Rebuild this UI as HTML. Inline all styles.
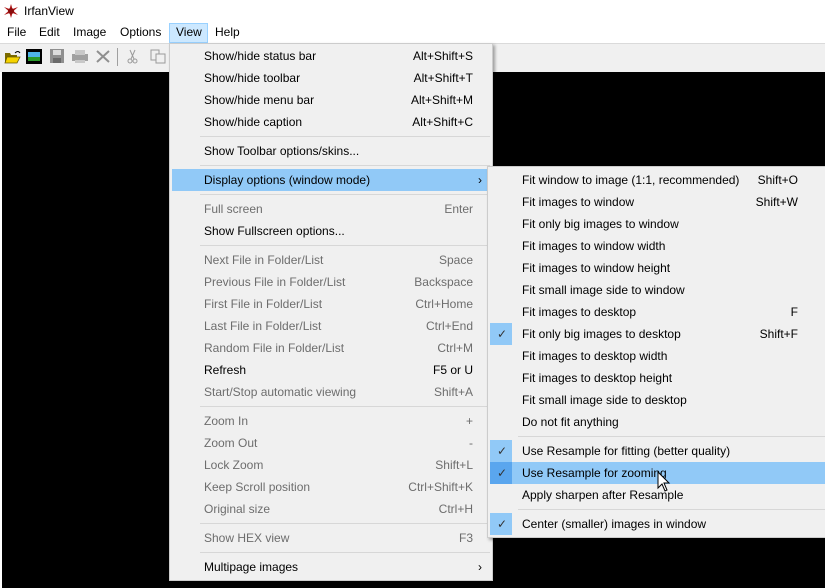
<!DOCTYPE html>
<html><head><meta charset="utf-8"><style>
*{margin:0;padding:0;box-sizing:border-box}
body{width:825px;height:588px;overflow:hidden;background:#fff;font-family:"Liberation Sans",sans-serif;font-size:12px;color:#000;position:relative}
.abs{position:absolute}
#title{left:0;top:0;width:825px;height:22px;background:#fff}
#title span{position:absolute;left:24px;top:4px;font-size:12px}
#menubar{left:0;top:22px;width:825px;height:21px;background:#fff}
#menubar span{position:absolute;top:3px}
#tb{left:0;top:43px;width:825px;height:29px;background:#f0f0f0;border-top:1px solid #dadada}
#black{left:2px;top:72px;width:823px;height:516px;background:#000}
.menu{background:#f0f0f0;border:1px solid #ccc;box-shadow:2px 2px 3px rgba(0,0,0,.35)}
.it{position:absolute;height:22px;line-height:22px;white-space:nowrap}
.it .t{position:absolute}
.it .k{position:absolute;text-align:right}
.dis{color:#6d6d6d}
.sep{position:absolute;height:1px;background:#d7d7d7}
.hl{background:#91c9f7}
.ck{position:absolute;width:22px;height:22px;background:#91c9f7}
.ck.dk{background:#5aa6ee}
</style></head><body>
<div id="title" class="abs">
<svg class="abs" style="left:3px;top:3px" width="16" height="16" viewBox="0 0 16 16"><path d="M8 1 L9.5 6 L15 4 L10.5 8 L15 12 L9.5 10 L8 15 L6.5 10 L1 12 L5.5 8 L1 4 L6.5 6Z" fill="#b01818"/><circle cx="8" cy="8" r="3" fill="#8a0c0c"/></svg>
<span>IrfanView</span></div>
<div id="menubar" class="abs">
<span style="left:7px">File</span><span style="left:39px">Edit</span><span style="left:73px">Image</span><span style="left:120px">Options</span>
<div class="abs" style="left:169px;top:1px;width:39px;height:20px;background:#cce8ff;border:1px solid #99d1ff"></div>
<span style="left:176px">View</span><span style="left:215px">Help</span></div>
<div id="tb" class="abs">
<svg class="abs" style="left:4px;top:5px" width="17" height="15"><path d="M1 4h5l1 2h6v8H1z" fill="#7a6a00"/><path d="M3 8h13l-3 6H1z" fill="#f5d300" stroke="#6a5a00" stroke-width=".8"/><path d="M11 4q3-3 5 0" stroke="#000" fill="none"/></svg>
<svg class="abs" style="left:26px;top:5px" width="16" height="15"><rect x="0" y="0" width="16" height="15" fill="#000"/><rect x="2" y="3" width="12" height="9" fill="#4fb4e8"/><rect x="2" y="8" width="12" height="4" fill="#2a9a2a"/></svg>
<svg class="abs" style="left:50px;top:5px" width="14" height="15"><rect width="14" height="14" fill="#8f8f8f"/><rect x="3" y="1" width="8" height="5" fill="#dcdcdc"/><rect x="3" y="9" width="8" height="5" fill="#6a6a6a"/></svg>
<svg class="abs" style="left:72px;top:5px" width="16" height="15"><rect x="0" y="5" width="16" height="7" fill="#a0a0a0"/><rect x="3" y="1" width="10" height="5" fill="#c8c8c8"/><rect x="3" y="11" width="10" height="3" fill="#c8c8c8"/></svg>
<svg class="abs" style="left:96px;top:6px" width="14" height="13"><path d="M1 1L13 12M13 1L1 12" stroke="#8f8f8f" stroke-width="2"/></svg>
<div class="abs" style="left:117px;top:4px;width:1px;height:18px;background:#a0a0a0"></div>
<svg class="abs" style="left:127px;top:5px" width="11" height="15"><path d="M3 1L7 10M8 1L4 10" stroke="#9a9a9a"/><circle cx="3" cy="12" r="2" fill="none" stroke="#9a9a9a"/><circle cx="8" cy="12" r="2" fill="none" stroke="#9a9a9a"/></svg>
<svg class="abs" style="left:150px;top:5px" width="16" height="15"><rect x="1" y="1" width="8" height="10" fill="none" stroke="#9a9a9a"/><rect x="6" y="5" width="9" height="9" fill="#f0f0f0" stroke="#9a9a9a"/></svg>
</div>
<div id="black" class="abs"></div>

<div class="abs menu" style="left:169px;top:43px;width:324px;height:538px">
<div class="it" style="left:0;top:1px;width:322px"><span class="t" style="left:34px">Show/hide status bar</span><span class="k" style="right:19px">Alt+Shift+S</span></div>
<div class="it" style="left:0;top:23px;width:322px"><span class="t" style="left:34px">Show/hide toolbar</span><span class="k" style="right:19px">Alt+Shift+T</span></div>
<div class="it" style="left:0;top:45px;width:322px"><span class="t" style="left:34px">Show/hide menu bar</span><span class="k" style="right:19px">Alt+Shift+M</span></div>
<div class="it" style="left:0;top:67px;width:322px"><span class="t" style="left:34px">Show/hide caption</span><span class="k" style="right:19px">Alt+Shift+C</span></div>
<div class="sep" style="left:30px;top:92px;width:290px"></div>
<div class="it" style="left:0;top:96px;width:322px"><span class="t" style="left:34px">Show Toolbar options/skins...</span></div>
<div class="sep" style="left:30px;top:121px;width:290px"></div>
<div class="it hl" style="left:2px;top:125px;width:318px"><span class="t" style="left:32px">Display options (window mode)</span><span class="k" style="right:8px">›</span></div>
<div class="sep" style="left:30px;top:150px;width:290px"></div>
<div class="it dis" style="left:0;top:154px;width:322px"><span class="t" style="left:34px">Full screen</span><span class="k" style="right:19px">Enter</span></div>
<div class="it" style="left:0;top:176px;width:322px"><span class="t" style="left:34px">Show Fullscreen options...</span></div>
<div class="sep" style="left:30px;top:201px;width:290px"></div>
<div class="it dis" style="left:0;top:205px;width:322px"><span class="t" style="left:34px">Next File in Folder/List</span><span class="k" style="right:19px">Space</span></div>
<div class="it dis" style="left:0;top:227px;width:322px"><span class="t" style="left:34px">Previous File in Folder/List</span><span class="k" style="right:19px">Backspace</span></div>
<div class="it dis" style="left:0;top:249px;width:322px"><span class="t" style="left:34px">First File in Folder/List</span><span class="k" style="right:19px">Ctrl+Home</span></div>
<div class="it dis" style="left:0;top:271px;width:322px"><span class="t" style="left:34px">Last File in Folder/List</span><span class="k" style="right:19px">Ctrl+End</span></div>
<div class="it dis" style="left:0;top:293px;width:322px"><span class="t" style="left:34px">Random File in Folder/List</span><span class="k" style="right:19px">Ctrl+M</span></div>
<div class="it" style="left:0;top:315px;width:322px"><span class="t" style="left:34px">Refresh</span><span class="k" style="right:19px">F5 or U</span></div>
<div class="it dis" style="left:0;top:337px;width:322px"><span class="t" style="left:34px">Start/Stop automatic viewing</span><span class="k" style="right:19px">Shift+A</span></div>
<div class="sep" style="left:30px;top:362px;width:290px"></div>
<div class="it dis" style="left:0;top:366px;width:322px"><span class="t" style="left:34px">Zoom In</span><span class="k" style="right:19px">+</span></div>
<div class="it dis" style="left:0;top:388px;width:322px"><span class="t" style="left:34px">Zoom Out</span><span class="k" style="right:19px">-</span></div>
<div class="it dis" style="left:0;top:410px;width:322px"><span class="t" style="left:34px">Lock Zoom</span><span class="k" style="right:19px">Shift+L</span></div>
<div class="it dis" style="left:0;top:432px;width:322px"><span class="t" style="left:34px">Keep Scroll position</span><span class="k" style="right:19px">Ctrl+Shift+K</span></div>
<div class="it dis" style="left:0;top:454px;width:322px"><span class="t" style="left:34px">Original size</span><span class="k" style="right:19px">Ctrl+H</span></div>
<div class="sep" style="left:30px;top:479px;width:290px"></div>
<div class="it dis" style="left:0;top:483px;width:322px"><span class="t" style="left:34px">Show HEX view</span><span class="k" style="right:19px">F3</span></div>
<div class="sep" style="left:30px;top:508px;width:290px"></div>
<div class="it" style="left:0;top:512px;width:322px"><span class="t" style="left:34px">Multipage images</span><span class="k" style="right:10px">›</span></div>
</div>

<div class="abs menu" style="left:487px;top:166px;width:345px;height:372px">
<div class="it" style="left:0;top:2px;width:343px"><span class="t" style="left:34px">Fit window to image (1:1, recommended)</span><span class="k" style="right:33px">Shift+O</span></div>
<div class="it" style="left:0;top:24px;width:343px"><span class="t" style="left:34px">Fit images to window</span><span class="k" style="right:33px">Shift+W</span></div>
<div class="it" style="left:0;top:46px;width:343px"><span class="t" style="left:34px">Fit only big images to window</span></div>
<div class="it" style="left:0;top:68px;width:343px"><span class="t" style="left:34px">Fit images to window width</span></div>
<div class="it" style="left:0;top:90px;width:343px"><span class="t" style="left:34px">Fit images to window height</span></div>
<div class="it" style="left:0;top:112px;width:343px"><span class="t" style="left:34px">Fit small image side to window</span></div>
<div class="it" style="left:0;top:134px;width:343px"><span class="t" style="left:34px">Fit images to desktop</span><span class="k" style="right:33px">F</span></div>
<div class="ck" style="left:2px;top:156px"></div>
<div class="it" style="left:0;top:156px;width:343px"><span class="t" style="left:9px;color:#333">✓</span><span class="t" style="left:34px">Fit only big images to desktop</span><span class="k" style="right:33px">Shift+F</span></div>
<div class="it" style="left:0;top:178px;width:343px"><span class="t" style="left:34px">Fit images to desktop width</span></div>
<div class="it" style="left:0;top:200px;width:343px"><span class="t" style="left:34px">Fit images to desktop height</span></div>
<div class="it" style="left:0;top:222px;width:343px"><span class="t" style="left:34px">Fit small image side to desktop</span></div>
<div class="it" style="left:0;top:244px;width:343px"><span class="t" style="left:34px">Do not fit anything</span></div>
<div class="sep" style="left:30px;top:269px;width:313px"></div>
<div class="ck" style="left:2px;top:273px"></div>
<div class="it" style="left:0;top:273px;width:343px"><span class="t" style="left:9px;color:#333">✓</span><span class="t" style="left:34px">Use Resample for fitting (better quality)</span></div>
<div class="abs hl" style="left:2px;top:295px;width:341px;height:22px"></div>
<div class="ck dk" style="left:2px;top:295px"></div>
<div class="it" style="left:0;top:295px;width:343px"><span class="t" style="left:9px;color:#333">✓</span><span class="t" style="left:34px">Use Resample for zooming</span></div>
<div class="it" style="left:0;top:317px;width:343px"><span class="t" style="left:34px">Apply sharpen after Resample</span></div>
<div class="sep" style="left:30px;top:342px;width:313px"></div>
<div class="ck" style="left:2px;top:346px"></div>
<div class="it" style="left:0;top:346px;width:343px"><span class="t" style="left:9px;color:#333">✓</span><span class="t" style="left:34px">Center (smaller) images in window</span></div>
</div>
<svg class="abs" style="left:657px;top:471px" width="14" height="22"><path d="M1 1V17L5 13L8 20L10 19L7 12H12Z" fill="#fff" stroke="#000"/></svg>
</body></html>
